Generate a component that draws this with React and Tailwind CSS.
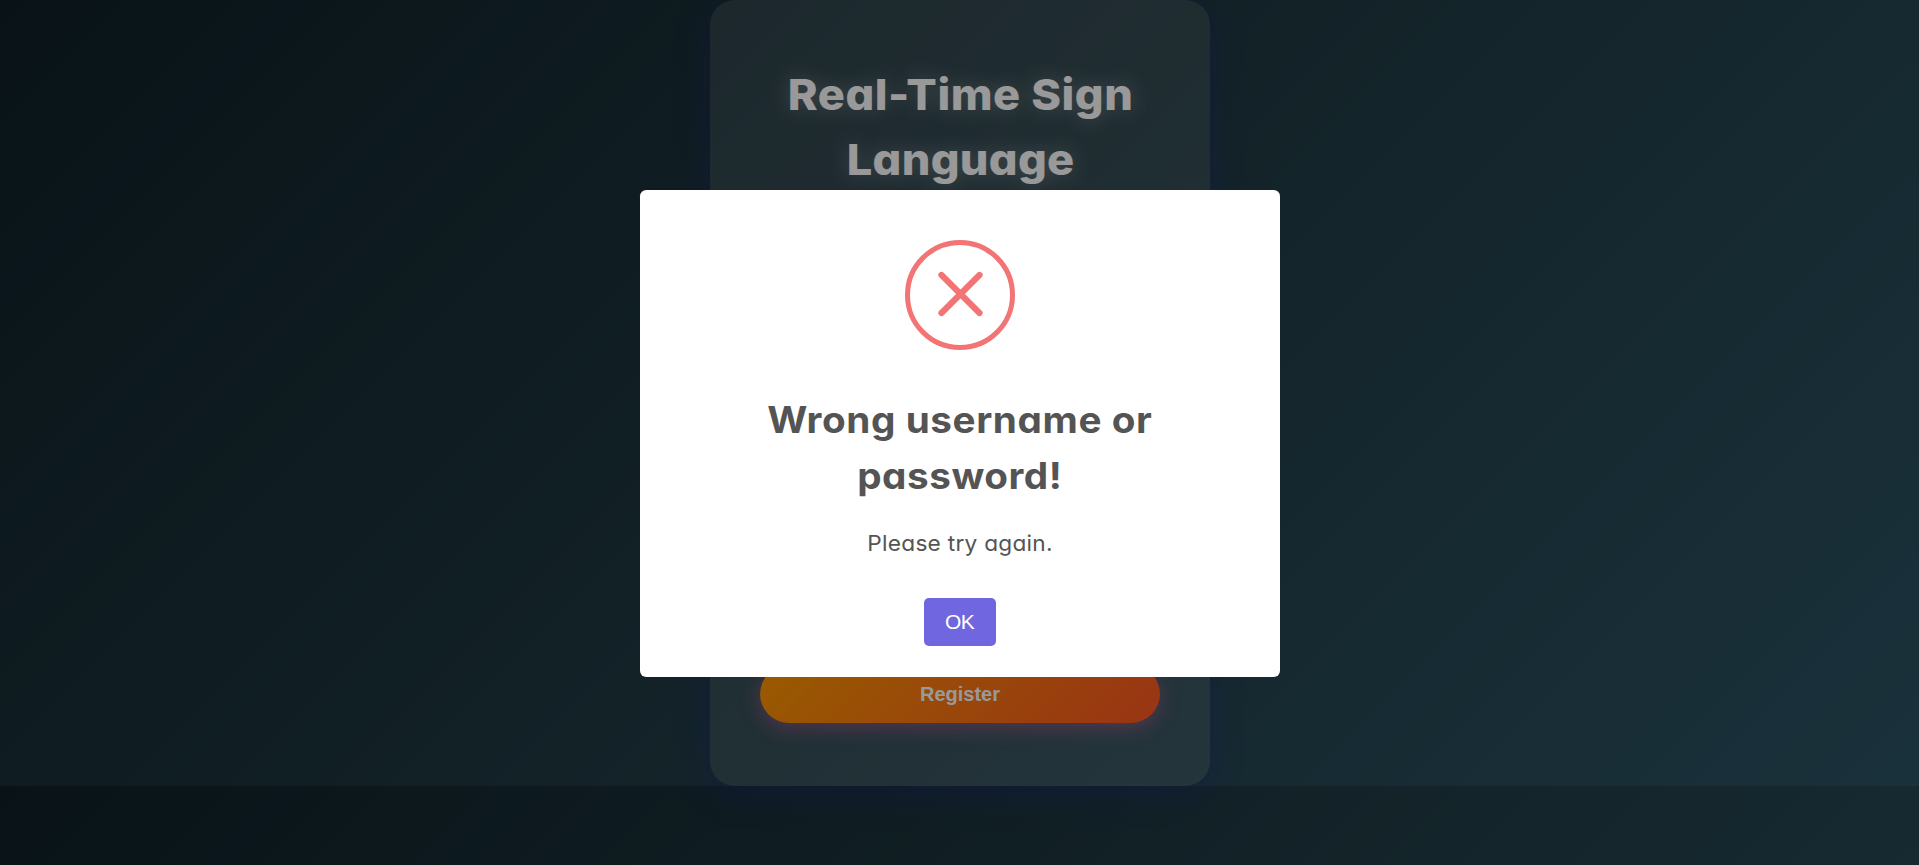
function ErrorIcon() {
  return (
    <svg viewBox="0 0 110 110" className="size-[110px]" fill="none" stroke="#f27474">
      <circle cx="55" cy="55" r="52.5" strokeWidth="5" />
      <path d="M36.5 35 L74.5 73 M74.5 35 L36.5 73" strokeWidth="6.25" strokeLinecap="round" />
    </svg>
  );
}

function LoginCard() {
  return (
    <main className="flex h-[786px] w-[500px] flex-col items-center justify-between rounded-[25px] bg-white/10 px-[50px] pt-[62px] pb-[63px] shadow-[0_8px_32px_rgba(31,38,135,0.37)]">
      <h1 className="scale-x-105 pl-[2px] text-center text-[43px] leading-[65px] font-extrabold whitespace-nowrap text-white [text-shadow:0_0_20px_rgba(255,255,255,0.3)]">
        <span className="block tracking-[0.5px]">Real-Time Sign</span>
        <span className="block tracking-[0.3px]">Language</span>
      </h1>
      <button className="h-[58px] w-[400px] rounded-[30px] bg-[linear-gradient(135deg,#ff9800,#ff5722)] pl-px font-['Liberation_Sans',sans-serif] text-xl font-bold text-white shadow-[0_5px_20px_rgba(255,105,180,0.4)]">
        Register
      </button>
    </main>
  );
}

function ErrorDialog() {
  return (
    <section role="alertdialog" className="flex h-[487px] w-[640px] flex-col items-center rounded-[6.25px] bg-white pt-[50px] text-[#545454]">
      <ErrorIcon />
      <h2 className="mt-[42px] scale-x-106 pl-px text-center text-[36.5px] leading-[56px] font-bold whitespace-nowrap">
        <span className="block tracking-[0.55px]">Wrong username or</span>
        <span className="block tracking-[0.5px]">password!</span>
      </h2>
      <p className="mt-[22px] scale-x-103 pl-[2px] text-[22px] leading-[34px] tracking-[0.25px]">Please try again.</p>
      <button className="mt-[38px] h-12 w-[72px] rounded-[5px] bg-[#7066e0] pb-px font-['Liberation_Sans',sans-serif] text-[21px] tracking-[-0.6px] text-white">
        OK
      </button>
    </section>
  );
}

export default function App() {
  return (
    <div className="relative h-[865px] overflow-hidden bg-[linear-gradient(135deg,#0f2027,#203a43,#2c5364)] bg-[length:100%_786px] bg-repeat-y font-[Inter,sans-serif] [font-feature-settings:'cv11']">
      <div className="flex justify-center">
        <LoginCard />
      </div>
      <div className="absolute inset-0 flex items-start justify-center bg-black/40 pt-[190px]">
        <ErrorDialog />
      </div>
    </div>
  );
}
